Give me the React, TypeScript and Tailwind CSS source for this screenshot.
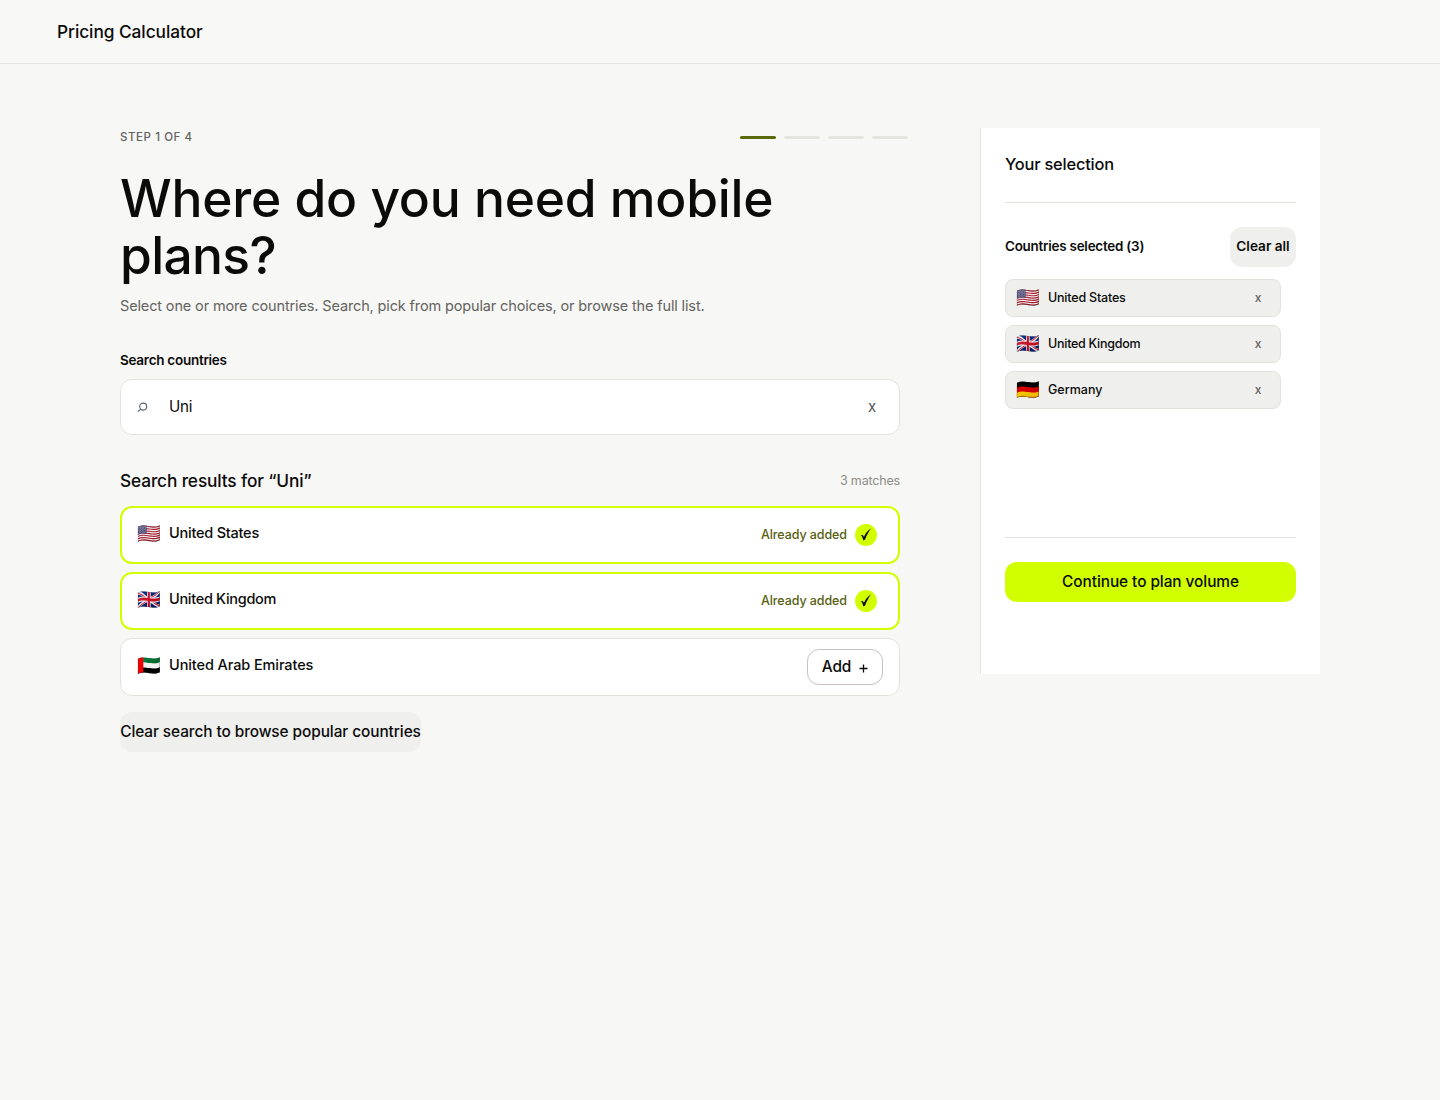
import { useState } from "react";

type Country = { code: string; name: string; flag: string; tracking: string };

const COUNTRIES: Country[] = [
  { code: "US", name: "United States", flag: "🇺🇸", tracking: "tracking-[-0.016em]" },
  { code: "GB", name: "United Kingdom", flag: "🇬🇧", tracking: "tracking-[-0.021em]" },
  { code: "AE", name: "United Arab Emirates", flag: "🇦🇪", tracking: "tracking-[-0.007em]" },
  { code: "DE", name: "Germany", flag: "🇩🇪", tracking: "tracking-normal" },
];

const STEPS = [1, 2, 3, 4];

function SearchIcon() {
  return (
    <svg viewBox="0 0 12 12" className="size-3" fill="none" stroke="#56646e" strokeWidth="1.1">
      <circle cx="6.2" cy="5.6" r="3.5" />
      <path d="M3.8 8.2 .8 10.6" />
    </svg>
  );
}

function CheckIcon() {
  return (
    <svg viewBox="0 0 22 22" className="size-[22px] rounded-full bg-[#d2ff00]">
      <path
        d="M6 11.3c1.5-.8 2.500-.3 2.900 1.700C10.600 9.400 12.700 6.200 16.300 4.300 13.500 7.700 11.500 11.500 10.100 15.500c-.4.600-1 .8-1.900.8-.3-1.900-.9-3.600-2.200-5Z"
        fill="#0b0b0a"
      />
    </svg>
  );
}

function Flag({ children }: { children: string }) {
  return (
    <span className="w-6 font-['Noto_Color_Emoji',sans-serif] text-[19px] leading-6 brightness-95">{children}</span>
  );
}

export default function App() {
  const [query, setQuery] = useState("Uni");
  const [selected, setSelected] = useState(["US", "GB", "DE"]);

  const matches = COUNTRIES.filter((c) => c.name.toLowerCase().includes(query.toLowerCase()));

  const add = (code: string) => setSelected([...selected, code]);
  const remove = (code: string) => setSelected(selected.filter((c) => c !== code));

  return (
    <div className="min-h-[1100px] bg-[#f7f7f5] font-['Inter',sans-serif] text-[#0b0b0a]">
      <header className="flex h-16 items-center border-b border-[#e3e3e0] bg-[#f8f8f6] pr-14 pl-[57px]">
        <span className="text-[17.3px] font-medium tracking-[-0.003em]">Pricing Calculator</span>
      </header>

      <main className="mx-auto flex w-[1200px] items-start gap-[72px] pt-16">
        <section className="w-[788px]">
          <div className="flex h-[18px] items-center justify-between">
            <span className="pt-0.5 text-[11.5px] font-medium tracking-[0.05em] text-[#63635f]">STEP 1 OF 4</span>
            <div className="flex gap-2">
              {STEPS.map((s) => (
                <span
                  key={s}
                  className={s === 1 ? "h-[3px] w-9 rounded-full bg-[#5a6a0a]" : "h-[3px] w-9 rounded-full bg-[#e5e5e0]"}
                />
              ))}
            </div>
          </div>

          <div className="w-[780px]">
            <h1 className="mt-6 text-[51.5px] leading-[57px] font-medium tracking-[-0.0045em]">
              Where do you need mobile <br />
              <span className="tracking-[-0.013em]">plans?</span>
            </h1>
            <p className="mt-[10px] text-[14.5px] leading-6 tracking-[-0.0095em] text-[#63635f]">
              Select one or more countries. Search, pick from popular choices, or browse the full list.
            </p>

            <label htmlFor="search" className="mt-8 block text-[13.5px] leading-5 font-semibold tracking-[-0.02em]">
              Search countries
            </label>
            <div className="mt-[9px] flex h-14 items-center rounded-xl border border-[#e3e3de] bg-white px-4">
              <SearchIcon />
              <input
                id="search"
                value={query}
                onChange={(e) => setQuery(e.target.value)}
                className="ml-5 min-w-0 flex-1 text-[15.2px] tracking-[-0.02em] outline-none"
              />
              <button onClick={() => setQuery("")} className="-mr-px w-6 text-center text-[15px] text-[#55554f]">
                x
              </button>
            </div>

            <div className="mt-8 flex h-7 items-center justify-between">
              <h2 className="text-[17.3px] font-medium tracking-[-0.008em]">Search results for “{query}”</h2>
              <span className="text-[12.5px] tracking-[-0.014em] text-[#8c8c86]">{matches.length} matches</span>
            </div>

            <ul className="mt-[11px] space-y-2">
              {matches.map((c) => {
                const added = selected.includes(c.code);
                return (
                  <li
                    key={c.code}
                    className={
                      added
                        ? "flex h-[58px] items-center justify-between rounded-xl border-2 border-[#d2ff00] bg-white pr-[21px] pl-[15px]"
                        : "flex h-[58px] items-center justify-between rounded-xl border border-[#e3e3de] bg-white px-4"
                    }
                  >
                    <div className="flex items-center gap-2 pb-[3px]">
                      <Flag>{c.flag}</Flag>
                      <span className={`pb-0.5 text-[14.5px] font-medium ${c.tracking}`}>{c.name}</span>
                    </div>
                    {added ? (
                      <div className="flex items-center gap-2">
                        <span className="text-[12.5px] font-medium tracking-[-0.007em] text-[#56600f]">
                          Already added
                        </span>
                        <CheckIcon />
                      </div>
                    ) : (
                      <button
                        onClick={() => add(c.code)}
                        className="flex h-9 w-[76px] items-center justify-center gap-2 rounded-xl border border-[#c9c1c1] pb-px text-[15.4px] font-medium tracking-[-0.01em]"
                      >
                        <span>Add</span>
                        <svg viewBox="0 0 9 9" className="mt-[3px] size-[9px]" stroke="currentColor" strokeWidth="1.3">
                          <path d="M4.5 .5v8M.5 4.5h8" />
                        </svg>
                      </button>
                    )}
                  </li>
                );
              })}
            </ul>

            <button
              onClick={() => setQuery("")}
              className="mt-4 h-10 w-[301px] rounded-xl bg-[#efefed] pb-px text-[15.4px] font-medium tracking-[-0.005em] whitespace-nowrap"
            >
              Clear search to browse popular countries
            </button>
          </div>
        </section>

        <aside className="flex h-[546px] w-[340px] flex-col border-l border-[#e3e3e0] bg-white px-6">
          <h2 className="flex h-[75px] items-center border-b border-[#e3e3de] pb-0.5 text-[16.4px] font-medium tracking-[-0.012em]">
            Your selection
          </h2>

          <div className="mt-6 flex h-10 items-center justify-between">
            <span className="pb-0.5 text-[13.4px] font-semibold tracking-[-0.0165em]">
              Countries selected ({selected.length})
            </span>
            <button
              onClick={() => setSelected([])}
              className="h-10 w-[66px] rounded-xl bg-[#efefed] pb-px text-[13.6px] font-semibold"
            >
              Clear all
            </button>
          </div>

          <ul className="mt-3 h-[258px] w-[276px] space-y-2">
            {COUNTRIES.filter((c) => selected.includes(c.code)).map((c) => (
              <li
                key={c.code}
                className="flex h-[38px] items-center rounded-lg border border-[#e3e3de] bg-[#efefed] px-[10px]"
              >
                <Flag>{c.flag}</Flag>
                <span className={`ml-2 flex-1 text-[12.5px] font-medium ${c.tracking}`}>{c.name}</span>
                <button onClick={() => remove(c.code)} className="w-6 text-center text-xs font-medium text-[#63635f]">
                  x
                </button>
              </li>
            ))}
          </ul>

          <div className="border-t border-[#e3e3e0] pt-6">
            <button className="h-10 w-full rounded-xl bg-[#d2ff00] pb-px text-[15.4px] font-medium tracking-[-0.004em]">
              Continue to plan volume
            </button>
          </div>
        </aside>
      </main>
    </div>
  );
}
